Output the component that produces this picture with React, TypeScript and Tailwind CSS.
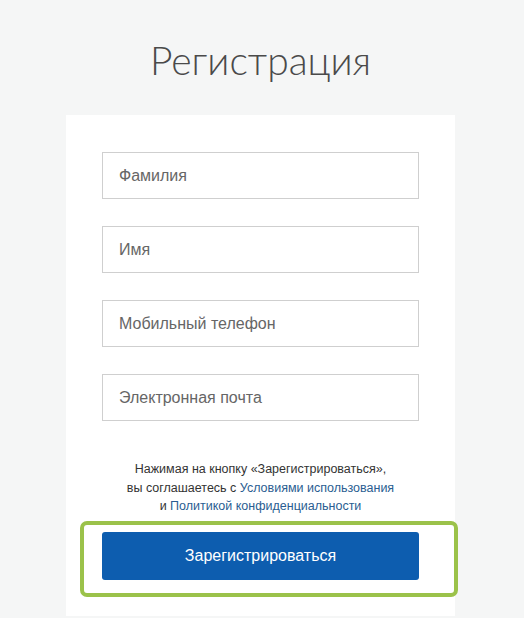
import React from "react";

const fields = ["Фамилия", "Имя", "Мобильный телефон", "Электронная почта"];

const App = () => {
    return (
        <div className="min-h-[618px] bg-[#f5f6f6] flex flex-col items-center font-['Liberation_Sans',Arial,sans-serif]">
            <h1 className="mt-[34px] mr-[3px] text-[39px] leading-[52px] font-light text-[#4a4a4a] font-['Lato',sans-serif]">
                Регистрация
            </h1>

            {/* Card */}
            <div className="relative mt-[29px] mr-[3px] w-[389px] h-[501px] bg-white flex flex-col items-center pt-[37px]">
                <div className="flex flex-col gap-[27px]">
                    {fields.map((field) => (
                        <input
                            key={field}
                            placeholder={field}
                            className="w-[317px] h-[47px] border border-[#cfcfcf] bg-white px-4 text-[16px] text-[#555] placeholder:text-[#666] outline-none"
                        />
                    ))}
                </div>

                <p className="mt-[39px] text-center text-[12.5px] leading-[18.5px] text-[#333]">
                    Нажимая на кнопку «Зарегистрироваться»,
                    <br />
                    вы соглашаетесь с <a className="text-[#2a5d91]">Условиями использования</a>
                    <br />
                    и <a className="text-[#2a5d91]">Политикой конфиденциальности</a>
                </p>

                <button className="mt-[16px] w-[317px] h-[48px] rounded-[3px] bg-[#0d5daf] text-white text-[16px]">
                    Зарегистрироваться
                </button>

                {/* highlight frame */}
                <div className="absolute left-[14px] top-[406px] w-[378px] h-[76px] rounded-[7px] border-[4px] border-[#9bc24a] pointer-events-none" />
            </div>
        </div>
    );
};

export default App;
